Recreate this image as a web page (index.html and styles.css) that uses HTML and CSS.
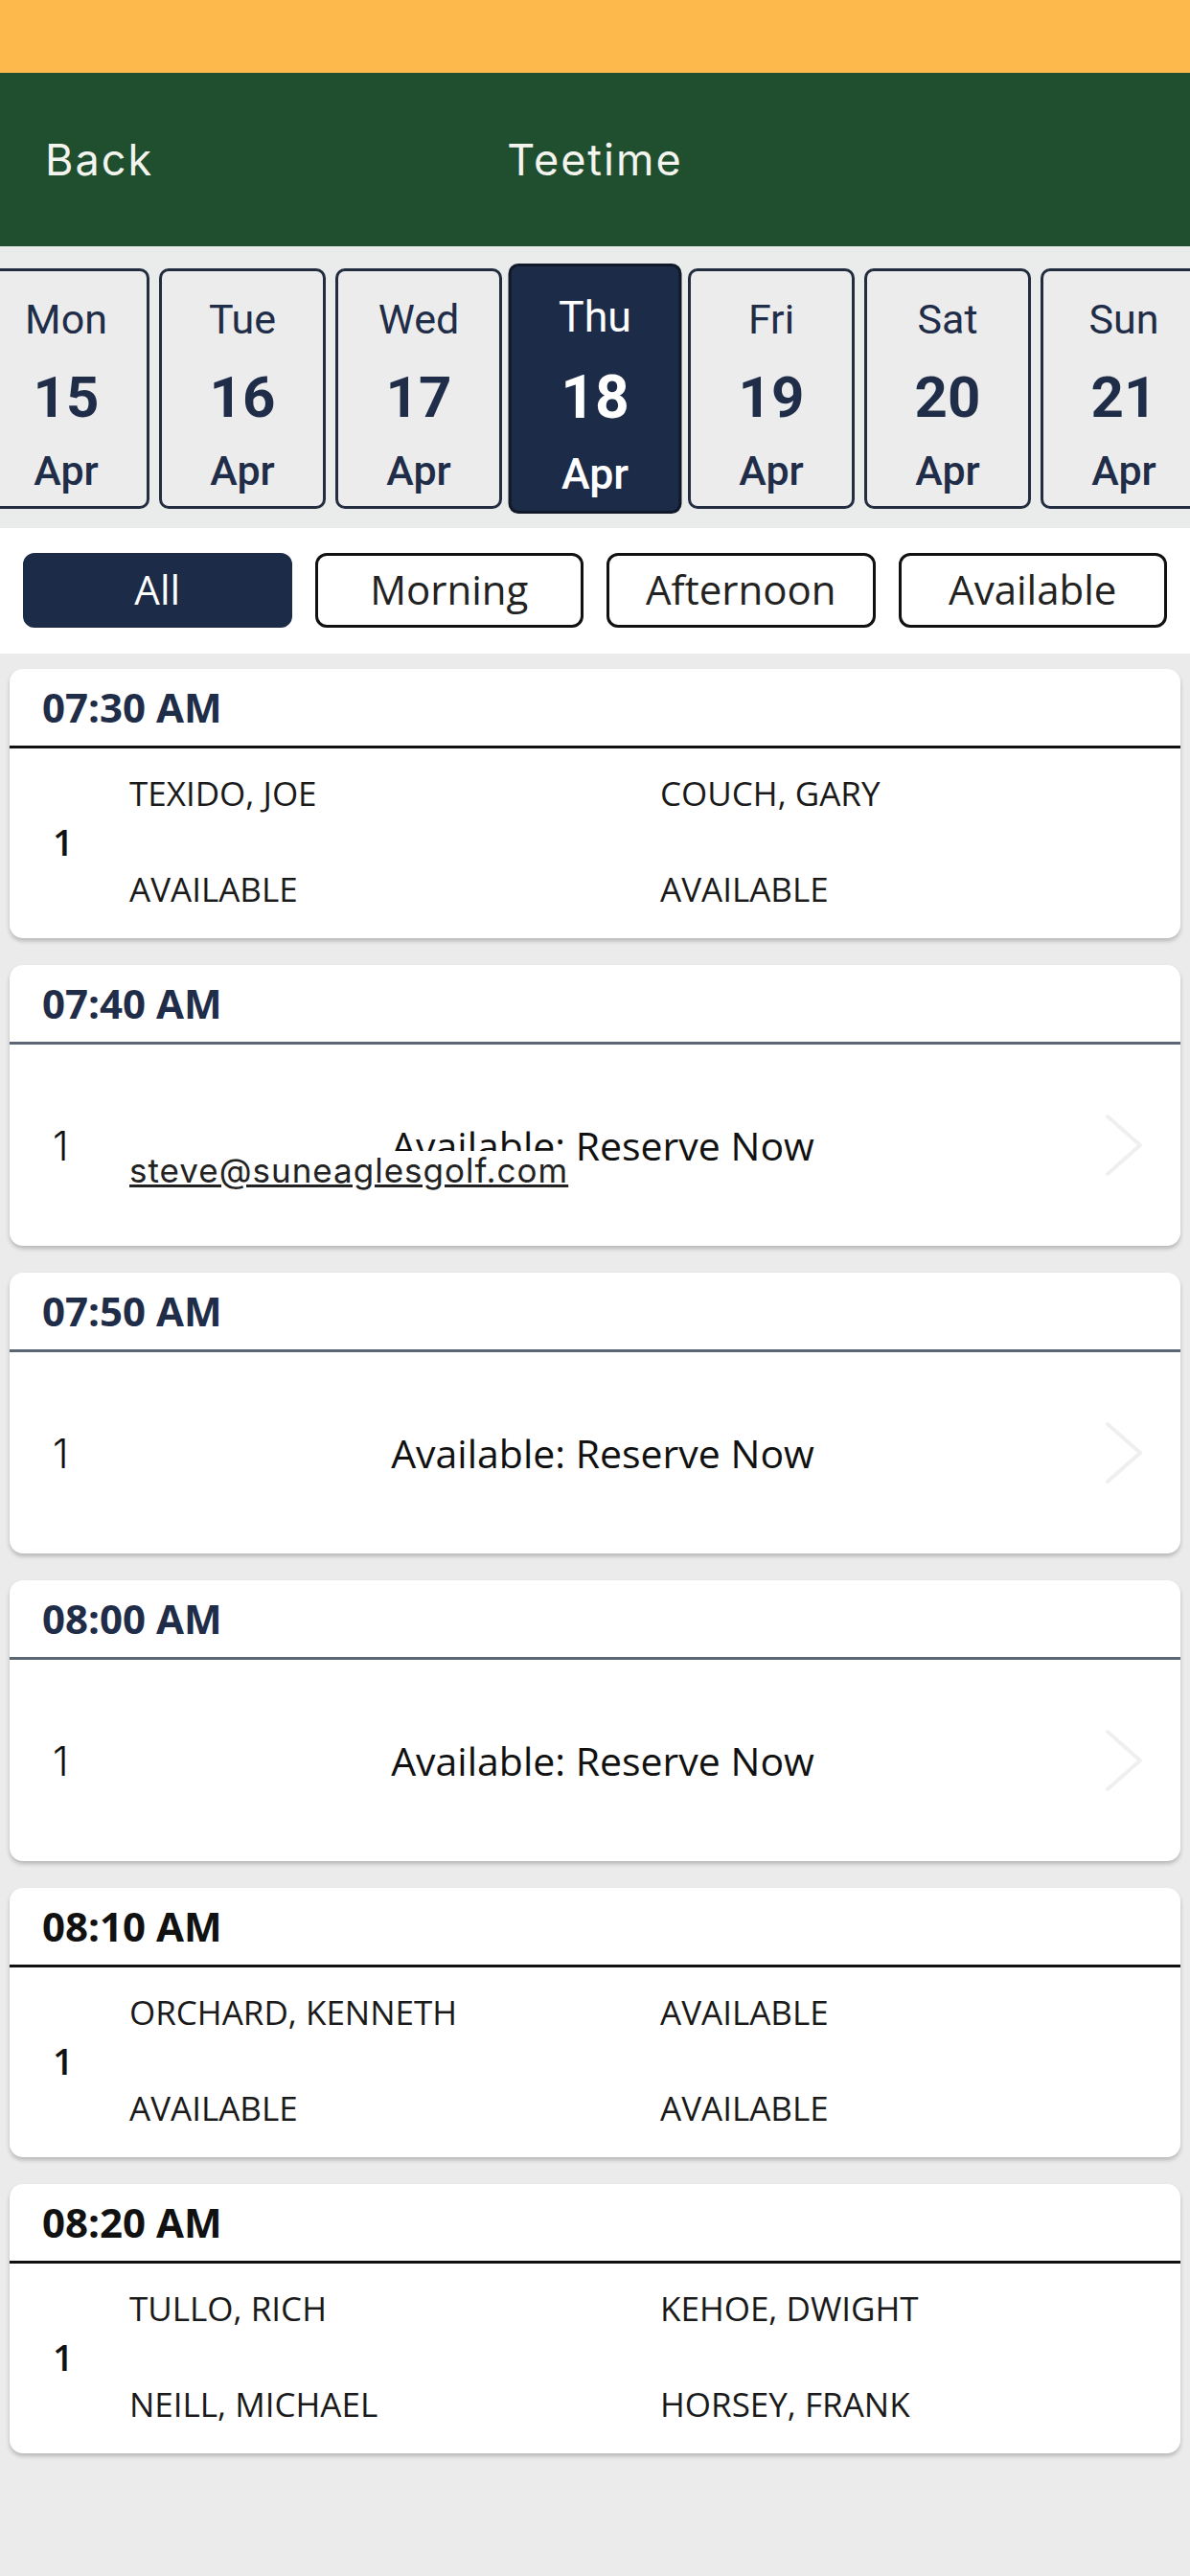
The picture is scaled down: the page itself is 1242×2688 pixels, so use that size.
FILE: index.html
```html
<!DOCTYPE html>
<html lang="en">
<head>
  <meta charset="UTF-8">
  <meta name="viewport" content="width=device-width, initial-scale=1.0">
  <title>Teetime</title>
  <link rel="stylesheet" href="styles.css">
</head>
<body>

  <div class="status"></div>

  <div class="topbar">
    <span class="back">Back</span>
    <span class="title">Teetime</span>
    <span></span>
  </div>

  <div class="days">
    <div class="day"><div class="dname">Mon</div><div class="dnum">15</div><div class="dmon">Apr</div></div>
    <div class="day"><div class="dname">Tue</div><div class="dnum">16</div><div class="dmon">Apr</div></div>
    <div class="day"><div class="dname">Wed</div><div class="dnum">17</div><div class="dmon">Apr</div></div>
    <div class="day selected"><div class="dname">Thu</div><div class="dnum">18</div><div class="dmon">Apr</div></div>
    <div class="day"><div class="dname">Fri</div><div class="dnum">19</div><div class="dmon">Apr</div></div>
    <div class="day"><div class="dname">Sat</div><div class="dnum">20</div><div class="dmon">Apr</div></div>
    <div class="day"><div class="dname">Sun</div><div class="dnum">21</div><div class="dmon">Apr</div></div>
  </div>

  <div class="filters">
    <button class="filter active">All</button>
    <button class="filter">Morning</button>
    <button class="filter">Afternoon</button>
    <button class="filter">Available</button>
  </div>

  <div class="list">

    <div class="card">
      <div class="card-head">07:30 AM</div>
      <div class="players">
        <div class="holes">1</div>
        <div class="names">
          <span>TEXIDO, JOE</span><span>COUCH, GARY</span>
          <span>AVAILABLE</span><span>AVAILABLE</span>
        </div>
      </div>
    </div>

    <div class="card open">
      <div class="card-head">07:40 AM</div>
      <div class="slot">
        <div class="holes">1</div>
        <div class="reserve">Available: Reserve Now</div>
        <svg class="chevron" width="40" height="66" viewBox="0 0 40 66"><polyline points="3,3 37,33 3,63" fill="none" stroke="#efefef" stroke-width="4" stroke-linecap="round" stroke-linejoin="round"/></svg>
        <a class="email" href="#">steve@suneaglesgolf.com</a>
      </div>
    </div>

    <div class="card open">
      <div class="card-head">07:50 AM</div>
      <div class="slot">
        <div class="holes">1</div>
        <div class="reserve">Available: Reserve Now</div>
        <svg class="chevron" width="40" height="66" viewBox="0 0 40 66"><polyline points="3,3 37,33 3,63" fill="none" stroke="#efefef" stroke-width="4" stroke-linecap="round" stroke-linejoin="round"/></svg>
      </div>
    </div>

    <div class="card open">
      <div class="card-head">08:00 AM</div>
      <div class="slot">
        <div class="holes">1</div>
        <div class="reserve">Available: Reserve Now</div>
        <svg class="chevron" width="40" height="66" viewBox="0 0 40 66"><polyline points="3,3 37,33 3,63" fill="none" stroke="#efefef" stroke-width="4" stroke-linecap="round" stroke-linejoin="round"/></svg>
      </div>
    </div>

    <div class="card dark">
      <div class="card-head">08:10 AM</div>
      <div class="players">
        <div class="holes">1</div>
        <div class="names">
          <span>ORCHARD, KENNETH</span><span>AVAILABLE</span>
          <span>AVAILABLE</span><span>AVAILABLE</span>
        </div>
      </div>
    </div>

    <div class="card dark">
      <div class="card-head">08:20 AM</div>
      <div class="players">
        <div class="holes">1</div>
        <div class="names">
          <span>TULLO, RICH</span><span>KEHOE, DWIGHT</span>
          <span>NEILL, MICHAEL</span><span>HORSEY, FRANK</span>
        </div>
      </div>
    </div>

  </div>

</body>
</html>
```

FILE: styles.css
```css
body {
  margin: 0;
  background-color: #ebebeb;
  font-family: "Open Sans", Arial, sans-serif;
  color: #111;
}
.status {
  height: 76px;
  background-color: #fdb94c;
}
.topbar {
  height: 181px;
  background-color: #204f30;
  display: grid;
  grid-template-columns: 1fr auto 1fr;
  align-items: center;
  padding: 0 47px;
  font-family: Inter, "Noto Sans", sans-serif;
  font-size: 45px;
  letter-spacing: 2px;
  color: #f4f4ef;
}
.days {
  display: flex;
  justify-content: center;
  gap: 10px;
  overflow: hidden;
  padding: 23px 0 20px;
  background-color: #eaebeb;
  font-family: Roboto, Arial, sans-serif;
}
.day {
  flex: none;
  width: 168px;
  height: 235px;
  padding-top: 10px;
  border: 3px solid #232d3f;
  border-radius: 10px;
  background-color: #ececec;
  color: #1f2d48;
  text-align: center;
}
.day.selected {
  background-color: #1c2b48;
  border-color: #111827;
  color: #fff;
  transform: scale(1.04);
}
.dname {
  font-size: 43px;
  line-height: 80px;
}
.dnum {
  font-size: 60px;
  font-weight: 700;
  line-height: 83px;
}
.dmon {
  font-size: 43px;
  font-weight: 500;
  line-height: 70px;
}
.filters {
  display: flex;
  gap: 24px;
  padding: 26px 24px 27px;
  background-color: #fff;
}
.filter {
  flex: 1;
  height: 78px;
  border: 3px solid #111;
  border-radius: 12px;
  background-color: #fff;
  color: #222;
  font-family: "Open Sans", Arial, sans-serif;
  font-size: 42px;
  padding: 0 0 3px;
}
.filter.active {
  background-color: #1c2b48;
  border-color: #1c2b48;
  color: #fff;
}
.list {
  display: flex;
  flex-direction: column;
  gap: 28px;
  padding: 16px 10px;
}
.card {
  background-color: #fff;
  border-radius: 14px;
  box-shadow: 0 3px 4px rgba(0, 0, 0, 0.22);
  overflow: hidden;
}
.card-head {
  height: 80px;
  line-height: 80px;
  padding-left: 34px;
  border-bottom: 3px solid #111;
  font-size: 42px;
  font-weight: 700;
  color: #1f2d48;
}
.card.open .card-head {
  border-bottom-color: #5b6573;
}
.card.dark .card-head {
  color: #111;
}
.players {
  display: flex;
  align-items: center;
  height: 193px;
  padding: 0 0 5px 45px;
}
.players .holes {
  width: 80px;
  font-size: 38px;
  font-weight: 600;
}
.names {
  flex: 1;
  display: grid;
  grid-template-columns: 554px 1fr;
  row-gap: 8px;
  font-size: 35px;
  line-height: 92px;
  color: #1a1a1a;
}
.slot {
  position: relative;
  display: flex;
  align-items: center;
  height: 210px;
  padding: 0 39px 0 45px;
}
.slot .holes {
  width: 50px;
  font-family: Inter, "Noto Sans", sans-serif;
  font-weight: 300;
  font-size: 42px;
}
.reserve {
  flex: 1;
  text-align: center;
  font-size: 41px;
}
.chevron {
  flex: none;
}
.email {
  position: absolute;
  left: 125px;
  top: 111px;
  background-color: #fff;
  font-family: Inter, "Noto Sans", sans-serif;
  font-size: 35px;
  letter-spacing: 1px;
  line-height: 40px;
  color: #222;
  text-decoration: underline;
}
```
